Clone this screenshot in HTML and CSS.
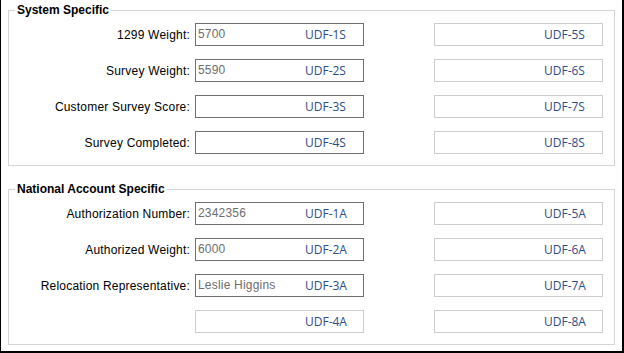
FILE: index.html
```html
<!DOCTYPE html>
<html lang="en">
<head>
<meta charset="UTF-8">
<title>User Defined Fields</title>
<link rel="stylesheet" href="styles.css">
</head>
<body>
<div class="panel">
  <fieldset class="group">
    <legend>System Specific</legend>
    <div class="rows">
      <label class="caption">1299 Weight:</label>
      <div class="field"><span class="value">5700</span><span class="udf">UDF-1S</span></div>
      <div class="field off"><span class="value"></span><span class="udf">UDF-5S</span></div>

      <label class="caption">Survey Weight:</label>
      <div class="field"><span class="value">5590</span><span class="udf">UDF-2S</span></div>
      <div class="field off"><span class="value"></span><span class="udf">UDF-6S</span></div>

      <label class="caption">Customer Survey Score:</label>
      <div class="field"><span class="value"></span><span class="udf">UDF-3S</span></div>
      <div class="field off"><span class="value"></span><span class="udf">UDF-7S</span></div>

      <label class="caption">Survey Completed:</label>
      <div class="field"><span class="value"></span><span class="udf">UDF-4S</span></div>
      <div class="field off"><span class="value"></span><span class="udf">UDF-8S</span></div>
    </div>
  </fieldset>

  <fieldset class="group">
    <legend>National Account Specific</legend>
    <div class="rows">
      <label class="caption">Authorization Number:</label>
      <div class="field"><span class="value">2342356</span><span class="udf">UDF-1A</span></div>
      <div class="field off"><span class="value"></span><span class="udf">UDF-5A</span></div>

      <label class="caption">Authorized Weight:</label>
      <div class="field"><span class="value">6000</span><span class="udf">UDF-2A</span></div>
      <div class="field off"><span class="value"></span><span class="udf">UDF-6A</span></div>

      <label class="caption">Relocation Representative:</label>
      <div class="field"><span class="value">Leslie Higgins</span><span class="udf">UDF-3A</span></div>
      <div class="field off"><span class="value"></span><span class="udf">UDF-7A</span></div>

      <label class="caption"></label>
      <div class="field off"><span class="value"></span><span class="udf">UDF-4A</span></div>
      <div class="field off"><span class="value"></span><span class="udf">UDF-8A</span></div>
    </div>
  </fieldset>
</div>
</body>
</html>
```

FILE: styles.css
```css
body {
  margin: 0;
  background-color: #fff;
  font-family: "Liberation Sans", Arial, sans-serif;
  font-size: 12px;
  color: #000;
}
.panel {
  height: 353px;
  box-sizing: border-box;
  border-left: 1px solid #000;
  border-right: 2px solid #000;
  border-bottom: 2px solid #000;
  padding: 3px 7px 0 7px;
}
.group {
  margin: 0 0 16px 0;
  padding: 6px 11px 11px 6px;
  border: 1px solid #d4d4d4;
  min-width: 0;
}
.group legend {
  padding: 0 2px;
  font-weight: bold;
  line-height: 14px;
}
.rows {
  display: grid;
  grid-template-columns: 1fr 169px 239px;
  grid-auto-rows: 23px;
  row-gap: 13px;
  align-items: center;
}
.caption {
  text-align: right;
  padding-right: 5px;
  line-height: 14px;
  letter-spacing: 0.2px;
}
.field {
  height: 23px;
  box-sizing: border-box;
  border: 1px solid #707070;
  display: grid;
  grid-template-columns: 109px 1fr;
  align-items: center;
}
.field.off {
  border-color: #cdcdcd;
}
.rows > .field:nth-child(3n) {
  width: 169px;
  justify-self: end;
}
.value {
  padding-left: 2px;
  color: #6d6d6d;
  line-height: 14px;
  margin-top: -1px;
  letter-spacing: 0.2px;
}
.udf {
  font-family: "Open Sans", sans-serif;
  font-size: 12px;
  color: #2d4d85;
  line-height: 16px;
  padding-top: 1px;
}
```
